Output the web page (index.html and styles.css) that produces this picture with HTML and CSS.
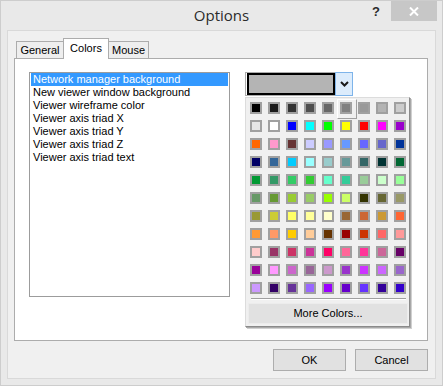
FILE: index.html
```html
<!DOCTYPE html>
<html>
<head>
<meta charset="utf-8">
<link rel="stylesheet" href="styles.css">
</head>
<body>
<div class="window">
  <div class="titlebar">
    <div></div>
    <div class="title">Options</div>
    <div class="controls">
      <span class="help">?</span>
      <span class="close"><svg width="10" height="9" viewBox="0 0 10 9"><path d="M1 0.5 L9 8.5 M9 0.5 L1 8.5" stroke="#fff" stroke-width="2" fill="none"/></svg></span>
    </div>
  </div>
  <div class="client">
    <div class="tabs">
      <div class="tab t-general">General</div>
      <div class="tab t-colors active">Colors</div>
      <div class="tab t-mouse">Mouse</div>
    </div>
    <div class="panel">
      <ul class="list">
        <li class="sel">Network manager background</li>
        <li>New viewer window background</li>
        <li>Viewer wireframe color</li>
        <li>Viewer axis triad X</li>
        <li>Viewer axis triad Y</li>
        <li>Viewer axis triad Z</li>
        <li>Viewer axis triad text</li>
      </ul>
      <div class="combo-wrap">
        <div class="combo">
          <div class="field"><div class="preview"></div></div>
          <div class="drop"><svg width="9" height="6" viewBox="0 0 9 6"><path d="M1 1 L4.5 4.5 L8 1" stroke="#1a1a1a" stroke-width="2" fill="none"/></svg></div>
        </div>
        <div class="popup">
          <div class="grid">
            <i style="background:#000000"></i><i style="background:#1a1a1a"></i><i style="background:#333333"></i><i style="background:#4d4d4d"></i><i style="background:#666666"></i><i class="hot" style="background:#808080"></i><i style="background:#999999"></i><i style="background:#b3b3b3"></i><i style="background:#cccccc"></i>
            <i style="background:#e6e6e6"></i><i style="background:#ffffff"></i><i style="background:#0000ff"></i><i style="background:#00ffff"></i><i style="background:#00ff00"></i><i style="background:#ffff00"></i><i style="background:#ff0000"></i><i style="background:#ff00ff"></i><i style="background:#9900cc"></i>
            <i style="background:#ff6600"></i><i style="background:#ff99cc"></i><i style="background:#663333"></i><i style="background:#ccccff"></i><i style="background:#9999ff"></i><i style="background:#6699ff"></i><i style="background:#6666ff"></i><i style="background:#6666cc"></i><i style="background:#003399"></i>
            <i style="background:#000066"></i><i style="background:#336699"></i><i style="background:#00ccff"></i><i style="background:#99ffff"></i><i style="background:#99cccc"></i><i style="background:#669999"></i><i style="background:#336666"></i><i style="background:#003333"></i><i style="background:#006633"></i>
            <i style="background:#009933"></i><i style="background:#339966"></i><i style="background:#33cc66"></i><i style="background:#33cc33"></i><i style="background:#66ffcc"></i><i style="background:#33cc99"></i><i style="background:#99cc99"></i><i style="background:#ccffcc"></i><i style="background:#99ff99"></i>
            <i style="background:#669966"></i><i style="background:#669933"></i><i style="background:#99cc33"></i><i style="background:#99cc66"></i><i style="background:#99ff00"></i><i style="background:#ccff66"></i><i style="background:#333300"></i><i style="background:#666633"></i><i style="background:#999966"></i>
            <i style="background:#999933"></i><i style="background:#cccc33"></i><i style="background:#ffff66"></i><i style="background:#ffff99"></i><i style="background:#ffffcc"></i><i style="background:#996633"></i><i style="background:#cc6633"></i><i style="background:#cc9933"></i><i style="background:#ff6633"></i>
            <i style="background:#ff9933"></i><i style="background:#ff9966"></i><i style="background:#ffcc00"></i><i style="background:#ffcc99"></i><i style="background:#663300"></i><i style="background:#990000"></i><i style="background:#cc3300"></i><i style="background:#ff6666"></i><i style="background:#ff9999"></i>
            <i style="background:#ffcccc"></i><i style="background:#993366"></i><i style="background:#cc3366"></i><i style="background:#cc3399"></i><i style="background:#ff0066"></i><i style="background:#ff6699"></i><i style="background:#ff3399"></i><i style="background:#cc6699"></i><i style="background:#660066"></i>
            <i style="background:#990099"></i><i style="background:#ff99ff"></i><i style="background:#cc66cc"></i><i style="background:#996699"></i><i style="background:#cc99cc"></i><i style="background:#9933cc"></i><i style="background:#cc33ff"></i><i style="background:#cc66ff"></i><i style="background:#9966cc"></i>
            <i style="background:#cc99ff"></i><i style="background:#330066"></i><i style="background:#663399"></i><i style="background:#9966ff"></i><i style="background:#9900ff"></i><i style="background:#6600cc"></i><i style="background:#6633ff"></i><i style="background:#330099"></i><i style="background:#3300cc"></i>
          </div>
          <div class="sep"></div>
          <div class="more">More Colors...</div>
        </div>
      </div>
    </div>
    <div class="buttons">
      <button class="btn">OK</button>
      <button class="btn">Cancel</button>
    </div>
  </div>
</div>
</body>
</html>
```
FILE: styles.css
```css
* { box-sizing: border-box; }
html, body { margin: 0; padding: 0; }
body {
  width: 443px;
  height: 386px;
  font-family: "Liberation Sans", Arial, sans-serif;
  font-size: 11px;
  color: #000;
  background: #e9e9e9;
}
.window {
  width: 443px;
  height: 386px;
  border: 1px solid #cdcdcd;
  background: #e9e9e9;
  display: flex;
  flex-direction: column;
}
.titlebar {
  height: 29px;
  display: grid;
  grid-template-columns: 1fr auto 1fr;
}
.title {
  font-family: "Open Sans", "Noto Sans", sans-serif;
  font-size: 15px;
  line-height: 29px;
  color: #2b2b2b;
}
.controls {
  justify-self: end;
  display: flex;
  align-items: flex-start;
  margin-right: 5px;
}
.help {
  font-family: "Liberation Sans", Arial, sans-serif;
  font-weight: bold;
  font-size: 13px;
  line-height: 13px;
  margin-top: 4px;
  margin-right: 11px;
  color: #2b2b2b;
}
.close {
  width: 46px;
  height: 20px;
  background: #c7c7c7;
  display: flex;
  align-items: center;
  justify-content: center;
}
.client {
  flex: 1;
  margin: 0 6px 6px 6px;
  border: 1px solid #d9d9d9;
  background: #f0f0f0;
  display: flex;
  flex-direction: column;
}
.tabs {
  display: flex;
  align-items: flex-end;
  margin-top: 7px;
  padding-left: 8px;
  height: 20px;
}
.tab {
  height: 17px;
  border: 1px solid #acacac;
  border-bottom: none;
  background: #eeeeee;
  text-align: center;
  line-height: 16px;
  margin-left: -1px;
}
.t-general { width: 48px; margin-left: 0; }
.t-colors { width: 46px; }
.t-mouse { width: 41px; }
.tab.active {
  height: 21px;
  margin-bottom: -1px;
  background: #fff;
  position: relative;
  z-index: 1;
  line-height: 18px;
}
.panel {
  margin-left: 6px;
  width: 414px;
  height: 283px;
  border: 1px solid #acacac;
  background: #fff;
  display: flex;
  align-items: flex-start;
  padding: 13px 0 0 14px;
}
.list {
  list-style: none;
  margin: 0;
  padding: 0 1px;
  width: 201px;
  height: 225px;
  border: 1px solid #9c9c9c;
}
.list li {
  height: 13px;
  line-height: 13px;
  padding-left: 2px;
  white-space: nowrap;
}
.list li.sel {
  background: #3399ff;
  color: #fff;
}
.combo-wrap {
  margin-left: 15px;
  position: relative;
}
.combo {
  display: flex;
  height: 24px;
}
.field {
  width: 90px;
  height: 24px;
  border: 1px solid #acacac;
  border-right: none;
  padding-left: 1px;
}
.preview {
  width: 88px;
  height: 22px;
  border: 2px solid #000;
  background: #b4b4b4;
}
.drop {
  width: 18px;
  height: 24px;
  border: 1px solid #7eb4ea;
  background: #dcecfc;
  display: flex;
  align-items: center;
  justify-content: center;
}
.popup {
  position: absolute;
  left: 0;
  top: 25px;
  width: 165px;
  border: 1px solid;
  border-color: #dcdcdc #8a8a8a #8a8a8a #dcdcdc;
  box-shadow: 1px 1px 0 #a8a8a8, 2px 2px 0 #d0d0d0;
  background: #f0f0f0;
  padding: 4px 2px 2px 4px;
  z-index: 2;
}
.grid {
  display: grid;
  grid-template-columns: repeat(9, 12px);
  grid-auto-rows: 12px;
  gap: 6px;
}
.grid i {
  display: block;
  width: 12px;
  height: 12px;
  border: 2px solid #a0a0a0;
}
.grid i.hot { position: relative; }
.grid i.hot::after {
  content: "";
  position: absolute;
  left: -5px;
  top: -5px;
  width: 18px;
  height: 18px;
  border: 1px solid;
  border-color: #ffffff #a0a0a0 #a0a0a0 #ffffff;
}
.sep {
  margin: 4px 1px 0 1px;
  height: 2px;
  border-top: 1px solid #a0a0a0;
  border-bottom: 1px solid #ffffff;
}
.more {
  margin: 3px -1px 0 -2px;
  height: 21px;
  background: #e1e1e1;
  border: 1px solid #ececec;
  text-align: center;
  line-height: 19px;
}
.buttons {
  display: flex;
  justify-content: flex-end;
  gap: 9px;
  padding-right: 7px;
  margin-top: 8px;
}
.btn {
  width: 73px;
  height: 22px;
  border: 1px solid #adadad;
  background: #e1e1e1;
  font-family: "Liberation Sans", Arial, sans-serif;
  font-size: 11px;
  color: #000;
  padding: 0;
}
```
